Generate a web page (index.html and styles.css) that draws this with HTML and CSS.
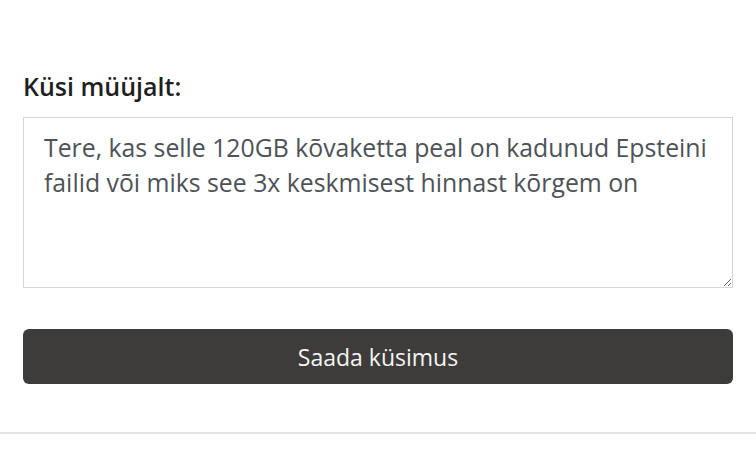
FILE: index.html
```html
<!DOCTYPE html>
<html lang="et">
<head>
<meta charset="utf-8">
<link rel="stylesheet" href="styles.css">
</head>
<body>
<div class="page">
  <form class="ask">
    <label class="ask-label" for="q">Küsi müüjalt:</label>
    <textarea id="q" class="ask-text">Tere, kas selle 120GB kõvaketta peal on kadunud Epsteini failid või miks see 3x keskmisest hinnast kõrgem on</textarea>
    <button type="button" class="ask-btn">Saada küsimus</button>
  </form>
  <hr class="divider">
</div>
</body>
</html>
```

FILE: styles.css
```css
html, body {
  margin: 0;
  padding: 0;
  background: #fff;
}
body {
  font-family: "Open Sans", "Noto Sans", sans-serif;
  color: #222;
}
.page {
  width: 756px;
  padding-top: 71px;
}
.ask {
  display: flex;
  flex-direction: column;
  padding: 0 23px;
}
.ask-label {
  font-size: 25px;
  font-weight: 600;
  line-height: 30px;
  color: #1f1f1f;
  margin-bottom: 16px;
}
.ask-text {
  box-sizing: border-box;
  width: 710px;
  height: 171px;
  border: 1px solid #d4d8dd;
  border-radius: 0;
  padding: 12px 20px;
  font-family: "Open Sans", "Noto Sans", sans-serif;
  font-size: 24.8px;
  line-height: 35px;
  color: #4d5257;
  resize: vertical;
  margin: 0;
}
.ask-btn {
  margin-top: 41px;
  width: 710px;
  height: 55px;
  border: none;
  border-radius: 6px;
  background: #3d3c3a;
  color: #f5f5f5;
  font-family: "Open Sans", "Noto Sans", sans-serif;
  font-size: 23px;
  padding: 0;
}
.divider {
  margin: 48px 0 0;
  border: none;
  border-top: 2px solid #e4e4e4;
}
```
